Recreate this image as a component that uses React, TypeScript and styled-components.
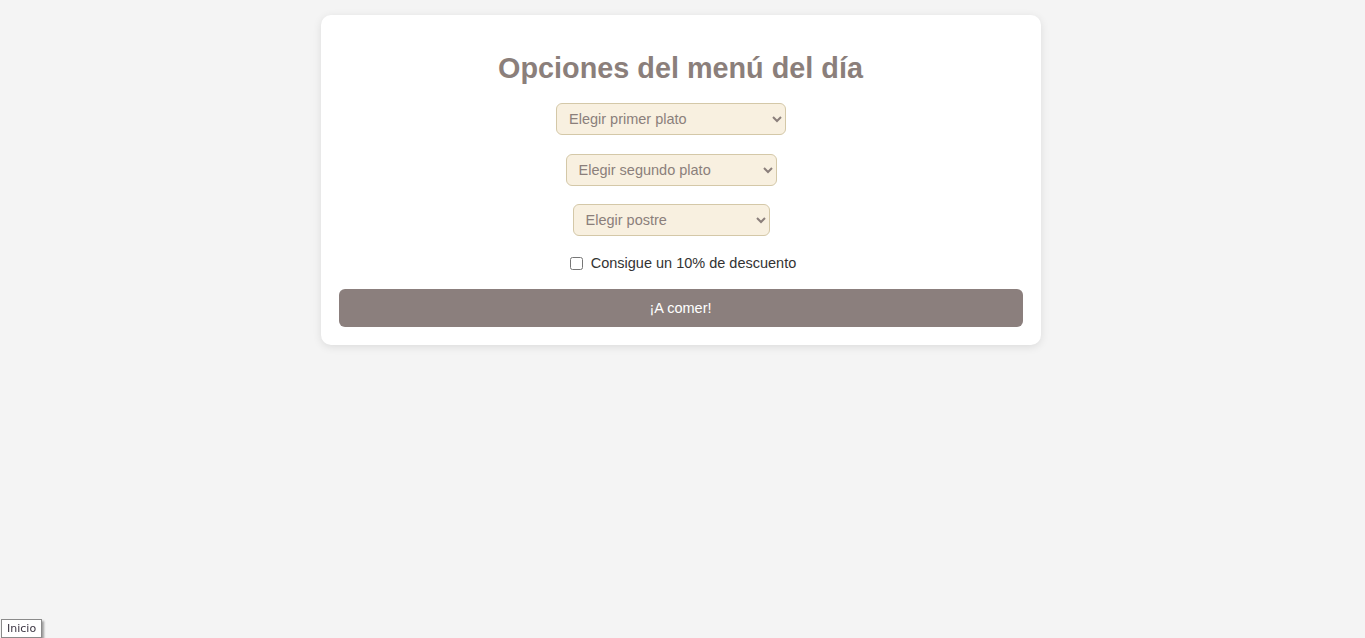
import React from "react";
import styled, { createGlobalStyle } from "styled-components";

const Global = createGlobalStyle`
  html, body { margin: 0; padding: 0; }
  body {
    background: #f4f4f4;
    font-family: "Liberation Sans", Arial, sans-serif;
    min-height: 638px;
  }
`;

const Page = styled.div`
  display: flex;
  justify-content: center;
  padding: 15px 4px 0 0;
`;

const Card = styled.form`
  width: 720px;
  box-sizing: border-box;
  background: #ffffff;
  border-radius: 10px;
  box-shadow: 0 2px 8px rgba(0, 0, 0, 0.1);
  padding: 18px 18px 18px;
  display: flex;
  flex-direction: column;
  align-items: center;
`;

const Title = styled.h1`
  margin: 16px 0 16px;
  font-size: 28.8px;
  font-weight: bold;
  color: #8b7f7b;
  line-height: 38px;
`;

const Select = styled.select<{ $mb?: number; $w: number }>`
  font-family: "Liberation Sans", Arial, sans-serif;
  font-size: 14.5px;
  color: #8b7f7b;
  background: #f8f0e0;
  border: 1px solid #d4c8a8;
  border-radius: 6px;
  width: ${(p) => p.$w}px;
  height: 32px;
  padding: 0 6px 0 8px;
  margin: 0 19px ${(p) => p.$mb ?? 19}px 0;
  outline: none;
`;

const CheckRow = styled.label`
  display: flex;
  align-items: center;
  gap: 8px;
  font-size: 14.5px;
  color: #333333;
  margin: 0 0 17px 2px;
  height: 18px;
`;

const Check = styled.input`
  margin: 0 0 0 3px;
  width: 13px;
  height: 13px;
`;

const Button = styled.button`
  width: 100%;
  height: 38px;
  border: none;
  border-radius: 6px;
  background: #8b7f7d;
  color: #ffffff;
  font-family: "Liberation Sans", Arial, sans-serif;
  font-size: 14.5px;
  font-weight: normal;
  cursor: pointer;
`;

const HomeLink = styled.a`
  position: fixed;
  left: 1px;
  bottom: 0px;
  height: 19px;
  padding: 0 5px;
  display: flex;
  align-items: center;
  background: #ffffff;
  border: 1px solid #8a8a8a;
  box-shadow: 2px 2px 2px rgba(0, 0, 0, 0.35);
  font-family: "DejaVu Sans", "Liberation Sans", sans-serif;
  font-size: 11px;
  color: #3a3340;
  text-decoration: none;
  box-sizing: border-box;
`;

export default function App() {
  return (
    <>
      <Global />
      <Page>
        <Card onSubmit={(e) => e.preventDefault()}>
          <Title>Opciones del menú del día</Title>
          <Select defaultValue="" $w={230}>
            <option value="">Elegir primer plato</option>
          </Select>
          <Select defaultValue="" $w={211} $mb={18}>
            <option value="">Elegir segundo plato</option>
          </Select>
          <Select defaultValue="" $w={197} $mb={18}>
            <option value="">Elegir postre</option>
          </Select>
          <CheckRow>
            <Check type="checkbox" />
            Consigue un 10% de descuento
          </CheckRow>
          <Button type="submit">¡A comer!</Button>
        </Card>
      </Page>
      <HomeLink href="#">Inicio</HomeLink>
    </>
  );
}
